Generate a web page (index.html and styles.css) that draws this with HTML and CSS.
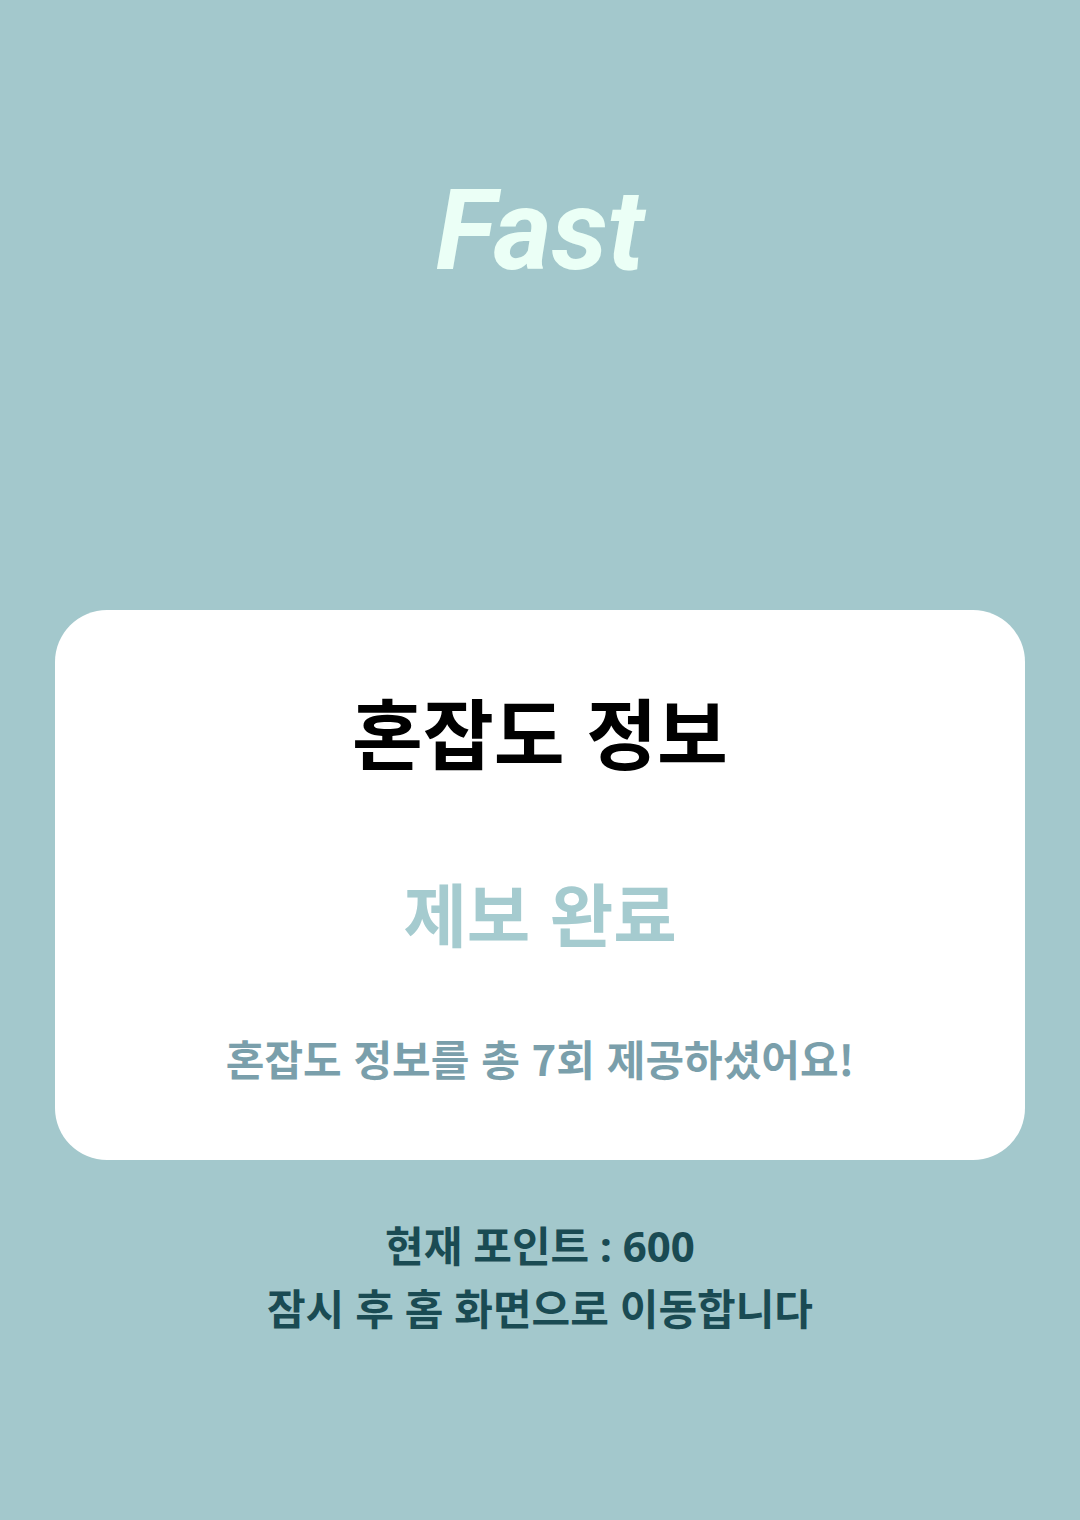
FILE: index.html
```html
<!DOCTYPE html>
<html lang="ko">
<head>
<meta charset="utf-8">
<link rel="stylesheet" href="styles.css">
</head>
<body>
<div class="screen">
  <header class="brand">Fast</header>
  <section class="card">
    <h1 class="card-title">혼잡도 정보</h1>
    <p class="card-status">제보 완료</p>
    <p class="card-note">혼잡도 정보를 총 7회 제공하셨어요!</p>
  </section>
  <div class="footer-msg">
    <p class="line">현재 포인트 : 600</p>
    <p class="line">잠시 후 홈 화면으로 이동합니다</p>
  </div>
</div>
</body>
</html>
```
FILE: styles.css
```css
html, body {
  margin: 0;
  padding: 0;
}
body {
  background: #a3c8cc;
  font-family: "Noto Sans CJK KR", "Noto Sans", sans-serif;
}
p, h1 {
  margin: 0;
}
.screen {
  width: 1080px;
  height: 1520px;
  display: flex;
  flex-direction: column;
  align-items: center;
}
.brand {
  margin-top: 166px;
  font-family: Roboto, "Liberation Sans", sans-serif;
  font-style: italic;
  font-weight: 700;
  font-size: 112px;
  line-height: 130px;
  color: #ebfff6;
}
.card {
  margin-top: 314px;
  width: 970px;
  height: 550px;
  box-sizing: border-box;
  background: #ffffff;
  border-radius: 52px;
  display: flex;
  flex-direction: column;
  align-items: center;
  padding-top: 76px;
}
.card-title {
  font-size: 77px;
  line-height: 90px;
  font-weight: 700;
  color: #000;
}
.card-status {
  margin-top: 96px;
  font-size: 69px;
  line-height: 80px;
  font-weight: 700;
  color: #a5cbcf;
}
.card-note {
  margin-top: 80px;
  font-size: 42px;
  line-height: 52px;
  font-weight: 700;
  color: #7a9fab;
}
.footer-msg {
  margin-top: 54px;
  text-align: center;
  color: #1a4b53;
  font-family: "Noto Sans", "Noto Sans CJK KR", sans-serif;
  font-weight: 700;
  font-size: 42px;
  line-height: 63px;
}
```
